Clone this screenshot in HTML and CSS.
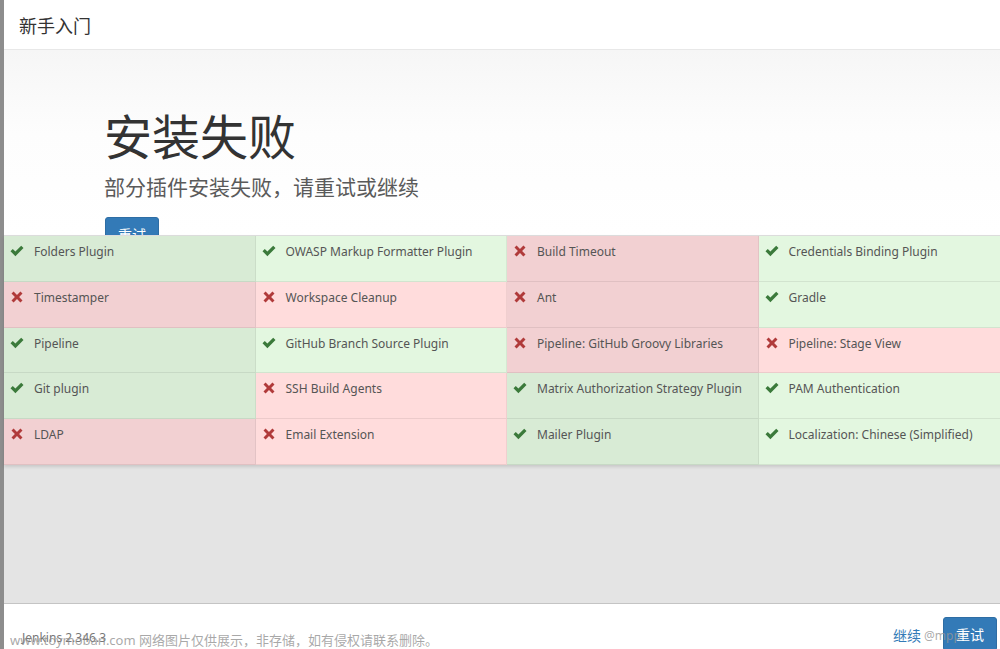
FILE: index.html
```html
<!DOCTYPE html>
<html lang="zh-CN">
<head>
<meta charset="utf-8">
<title>新手入门</title>
<link rel="stylesheet" href="styles.css">
</head>
<body>
<div class="modal">
  <div class="modal-header">新手入门</div>
  <div class="jumbotron">
    <h1 class="title">安装失败</h1>
    <p class="subtitle">部分插件安装失败，请重试或继续</p>
    <button class="btn">重试</button>
  </div>
  <div class="plugin-list">
    <div class="cell ok dark"><svg class="ico" viewBox="0 0 14 12"><path d="M0.5 6.3 L2.8 4.1 L5.4 6.6 L11.2 0.8 L13.5 3.1 L5.4 11.2 Z"/></svg><span>Folders Plugin</span></div>
    <div class="cell ok"><svg class="ico" viewBox="0 0 14 12"><path d="M0.5 6.3 L2.8 4.1 L5.4 6.6 L11.2 0.8 L13.5 3.1 L5.4 11.2 Z"/></svg><span>OWASP Markup Formatter Plugin</span></div>
    <div class="cell fail dark"><svg class="ico x" viewBox="0 0 12 12"><path d="M0.5 2.6 L2.6 0.5 L6 3.9 L9.4 0.5 L11.5 2.6 L8.1 6 L11.5 9.4 L9.4 11.5 L6 8.1 L2.6 11.5 L0.5 9.4 L3.9 6 Z"/></svg><span>Build Timeout</span></div>
    <div class="cell ok"><svg class="ico" viewBox="0 0 14 12"><path d="M0.5 6.3 L2.8 4.1 L5.4 6.6 L11.2 0.8 L13.5 3.1 L5.4 11.2 Z"/></svg><span>Credentials Binding Plugin</span></div>

    <div class="cell fail dark"><svg class="ico x" viewBox="0 0 12 12"><path d="M0.5 2.6 L2.6 0.5 L6 3.9 L9.4 0.5 L11.5 2.6 L8.1 6 L11.5 9.4 L9.4 11.5 L6 8.1 L2.6 11.5 L0.5 9.4 L3.9 6 Z"/></svg><span>Timestamper</span></div>
    <div class="cell fail"><svg class="ico x" viewBox="0 0 12 12"><path d="M0.5 2.6 L2.6 0.5 L6 3.9 L9.4 0.5 L11.5 2.6 L8.1 6 L11.5 9.4 L9.4 11.5 L6 8.1 L2.6 11.5 L0.5 9.4 L3.9 6 Z"/></svg><span>Workspace Cleanup</span></div>
    <div class="cell fail dark"><svg class="ico x" viewBox="0 0 12 12"><path d="M0.5 2.6 L2.6 0.5 L6 3.9 L9.4 0.5 L11.5 2.6 L8.1 6 L11.5 9.4 L9.4 11.5 L6 8.1 L2.6 11.5 L0.5 9.4 L3.9 6 Z"/></svg><span>Ant</span></div>
    <div class="cell ok"><svg class="ico" viewBox="0 0 14 12"><path d="M0.5 6.3 L2.8 4.1 L5.4 6.6 L11.2 0.8 L13.5 3.1 L5.4 11.2 Z"/></svg><span>Gradle</span></div>

    <div class="cell ok dark"><svg class="ico" viewBox="0 0 14 12"><path d="M0.5 6.3 L2.8 4.1 L5.4 6.6 L11.2 0.8 L13.5 3.1 L5.4 11.2 Z"/></svg><span>Pipeline</span></div>
    <div class="cell ok"><svg class="ico" viewBox="0 0 14 12"><path d="M0.5 6.3 L2.8 4.1 L5.4 6.6 L11.2 0.8 L13.5 3.1 L5.4 11.2 Z"/></svg><span>GitHub Branch Source Plugin</span></div>
    <div class="cell fail dark"><svg class="ico x" viewBox="0 0 12 12"><path d="M0.5 2.6 L2.6 0.5 L6 3.9 L9.4 0.5 L11.5 2.6 L8.1 6 L11.5 9.4 L9.4 11.5 L6 8.1 L2.6 11.5 L0.5 9.4 L3.9 6 Z"/></svg><span>Pipeline: GitHub Groovy Libraries</span></div>
    <div class="cell fail"><svg class="ico x" viewBox="0 0 12 12"><path d="M0.5 2.6 L2.6 0.5 L6 3.9 L9.4 0.5 L11.5 2.6 L8.1 6 L11.5 9.4 L9.4 11.5 L6 8.1 L2.6 11.5 L0.5 9.4 L3.9 6 Z"/></svg><span>Pipeline: Stage View</span></div>

    <div class="cell ok dark"><svg class="ico" viewBox="0 0 14 12"><path d="M0.5 6.3 L2.8 4.1 L5.4 6.6 L11.2 0.8 L13.5 3.1 L5.4 11.2 Z"/></svg><span>Git plugin</span></div>
    <div class="cell fail"><svg class="ico x" viewBox="0 0 12 12"><path d="M0.5 2.6 L2.6 0.5 L6 3.9 L9.4 0.5 L11.5 2.6 L8.1 6 L11.5 9.4 L9.4 11.5 L6 8.1 L2.6 11.5 L0.5 9.4 L3.9 6 Z"/></svg><span>SSH Build Agents</span></div>
    <div class="cell ok dark"><svg class="ico" viewBox="0 0 14 12"><path d="M0.5 6.3 L2.8 4.1 L5.4 6.6 L11.2 0.8 L13.5 3.1 L5.4 11.2 Z"/></svg><span>Matrix Authorization Strategy Plugin</span></div>
    <div class="cell ok"><svg class="ico" viewBox="0 0 14 12"><path d="M0.5 6.3 L2.8 4.1 L5.4 6.6 L11.2 0.8 L13.5 3.1 L5.4 11.2 Z"/></svg><span>PAM Authentication</span></div>

    <div class="cell fail dark"><svg class="ico x" viewBox="0 0 12 12"><path d="M0.5 2.6 L2.6 0.5 L6 3.9 L9.4 0.5 L11.5 2.6 L8.1 6 L11.5 9.4 L9.4 11.5 L6 8.1 L2.6 11.5 L0.5 9.4 L3.9 6 Z"/></svg><span>LDAP</span></div>
    <div class="cell fail"><svg class="ico x" viewBox="0 0 12 12"><path d="M0.5 2.6 L2.6 0.5 L6 3.9 L9.4 0.5 L11.5 2.6 L8.1 6 L11.5 9.4 L9.4 11.5 L6 8.1 L2.6 11.5 L0.5 9.4 L3.9 6 Z"/></svg><span>Email Extension</span></div>
    <div class="cell ok dark"><svg class="ico" viewBox="0 0 14 12"><path d="M0.5 6.3 L2.8 4.1 L5.4 6.6 L11.2 0.8 L13.5 3.1 L5.4 11.2 Z"/></svg><span>Mailer Plugin</span></div>
    <div class="cell ok"><svg class="ico" viewBox="0 0 14 12"><path d="M0.5 6.3 L2.8 4.1 L5.4 6.6 L11.2 0.8 L13.5 3.1 L5.4 11.2 Z"/></svg><span>Localization: Chinese (Simplified)</span></div>
  </div>
  <div class="filler"></div>
  <div class="modal-footer">
    <span class="version">Jenkins 2.346.3</span>
    <a class="continue" href="#">继续</a>
    <button class="btn">重试</button>
    <span class="watermark">www.toymoban.com 网络图片仅供展示，非存储，如有侵权请联系删除。</span>
    <span class="watermark wm-right">@mpp</span>
  </div>
</div>
</body>
</html>
```

FILE: styles.css
```css
html, body {
  margin: 0;
  padding: 0;
  height: 649px;
  overflow: hidden;
}
body {
  background: #8d8d8d;
  font-family: "Noto Sans", "Noto Sans CJK SC", sans-serif;
}
.modal {
  margin-left: 4px;
  width: 1006px;
  background: #fff;
}
.modal-header {
  height: 49px;
  border-bottom: 1px solid #e8e8e8;
  padding-left: 15px;
  display: flex;
  align-items: center;
  font-family: "Noto Sans CJK SC", sans-serif;
  font-size: 18px;
  color: #333;
}
.jumbotron {
  height: 185px;
  overflow: hidden;
  box-sizing: border-box;
  padding: 60px 0 0 100px;
  background: linear-gradient(to bottom, #f6f6f6 0%, #fdfdfd 45%, #ffffff 100%);
}
.title {
  margin: 0;
  font-family: "Noto Sans CJK SC", sans-serif;
  font-weight: 400;
  font-size: 48px;
  line-height: 48px;
  color: #333;
}
.subtitle {
  margin: 18px 0 0 0;
  font-family: "Noto Sans CJK SC", sans-serif;
  font-size: 21px;
  line-height: 21px;
  color: #5a5a5a;
}
.jumbotron .btn {
  margin-top: 20px;
  margin-left: 1px;
}
.btn {
  display: block;
  box-sizing: border-box;
  width: 54px;
  height: 34px;
  padding: 0;
  border: 1px solid #2e6da4;
  border-radius: 3px;
  background: #337ab7;
  color: #fff;
  font-family: "Noto Sans CJK SC", sans-serif;
  font-size: 14px;
  line-height: 32px;
}
.plugin-list {
  display: grid;
  grid-template-columns: repeat(4, 251.5px);
  grid-template-rows: repeat(5, 45.8px);
  border-top: 1px solid #dcdcdc;
  box-shadow: 0 2px 3px rgba(0, 0, 0, 0.12);
  position: relative;
}
.cell {
  display: flex;
  align-items: flex-start;
  box-sizing: border-box;
  padding: 6px 0 0 6px;
  border-right: 1px solid rgba(0, 0, 0, 0.06);
  border-bottom: 1px solid rgba(0, 0, 0, 0.07);
  font-size: 12px;
  line-height: 20px;
  color: #555;
  white-space: nowrap;
}
.cell.ok { background: #e3f7e0; }
.cell.ok.dark { background: #d8ebd5; }
.cell.fail { background: #ffdcdc; }
.cell.fail.dark { background: #f2d0d2; }
.ico {
  width: 14px;
  height: 12px;
  margin-top: 3px;
  margin-right: 10px;
  flex: none;
  fill: #3b7a3b;
}
.ico.x {
  width: 12px;
  height: 12px;
  margin-left: 1px;
  margin-right: 11px;
  fill: #b03a3a;
}
.filler {
  height: 138px;
  background: #e4e4e4;
}
.modal-footer {
  position: relative;
  display: flex;
  align-items: flex-start;
  height: 60px;
  box-sizing: border-box;
  border-top: 1px solid #c4c4c4;
  padding: 13px 0 0 18px;
}
.version {
  padding-top: 11px;
  font-size: 12px;
  line-height: 20px;
  color: #777;
}
.continue {
  margin-left: auto;
  padding-top: 8px;
  font-family: "Noto Sans CJK SC", sans-serif;
  font-size: 14px;
  line-height: 20px;
  color: #337ab7;
  text-decoration: none;
}
.modal-footer .btn {
  margin-left: 22px;
  margin-right: 13px;
}
.watermark {
  position: absolute;
  left: 6px;
  top: 26px;
  font-family: "Noto Sans", "Noto Sans CJK SC", sans-serif;
  font-size: 13px;
  line-height: 20px;
  color: rgba(140, 140, 140, 0.75);
  white-space: nowrap;
}
.watermark.wm-right {
  left: 920px;
  top: 22px;
  font-size: 12px;
  color: rgba(150, 150, 150, 0.8);
}
```
